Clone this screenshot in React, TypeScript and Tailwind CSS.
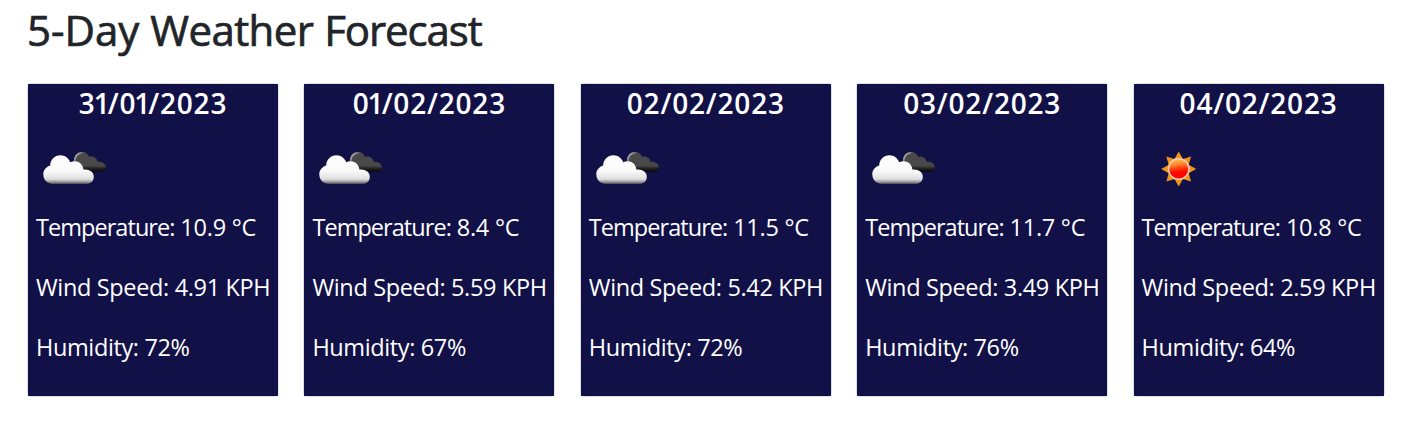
import React from "react";

type Condition = "clouds" | "sun";

interface Day {
  date: string;
  condition: Condition;
  temperature: string;
  wind: string;
  humidity: string;
}

const days: Day[] = [
  { date: "31/01/2023", condition: "clouds", temperature: "10.9", wind: "4.91", humidity: "72" },
  { date: "01/02/2023", condition: "clouds", temperature: "8.4", wind: "5.59", humidity: "67" },
  { date: "02/02/2023", condition: "clouds", temperature: "11.5", wind: "5.42", humidity: "72" },
  { date: "03/02/2023", condition: "clouds", temperature: "11.7", wind: "3.49", humidity: "76" },
  { date: "04/02/2023", condition: "sun", temperature: "10.8", wind: "2.59", humidity: "64" },
];

function Clouds({ id }: { id: string }) {
  return (
    <svg viewBox="0 0 75 75" className="block size-[75px]" aria-hidden="true">
      <defs>
        <linearGradient id={`${id}-white`} x1="0" y1="0" x2="0" y2="1">
          <stop offset="0" stopColor="#ffffff" />
          <stop offset="0.55" stopColor="#fafafa" />
          <stop offset="0.84" stopColor="#dedede" />
          <stop offset="0.93" stopColor="#999999" />
          <stop offset="1" stopColor="#66666c" />
        </linearGradient>
        <linearGradient id={`${id}-dark`} x1="0" y1="0" x2="0" y2="1">
          <stop offset="0" stopColor="#4a4a4a" />
          <stop offset="0.7" stopColor="#484848" />
          <stop offset="0.84" stopColor="#202020" />
          <stop offset="1" stopColor="#050505" />
        </linearGradient>
        <linearGradient id={`${id}-rim`} x1="0" y1="0" x2="1" y2="0.5">
          <stop offset="0" stopColor="#c8c8c8" />
          <stop offset="0.35" stopColor="#a0a0a0" stopOpacity="0.8" />
          <stop offset="0.6" stopColor="#555555" stopOpacity="0" />
        </linearGradient>
      </defs>
      <path
        d="M42 41.8C38 41 36.5 37 38 33C37.5 26 41.5 22 46 22C49.3 22 51.8 23.8 53.2 27C57 25.5 61 28 61.6 32C66 31.2 69.8 34 69.8 37.2C69.8 40.2 67.5 41.8 64.5 41.8Z"
        fill={`url(#${id}-dark)`}
      />
      <path
        d="M38.7 32C38.7 26.5 41.5 23 46 22.8C49 22.8 51 24.2 52.4 26.6"
        fill="none"
        stroke={`url(#${id}-rim)`}
        strokeWidth="1.8"
      />
      <path
        d="M16.5 53.8C11.5 53.8 7.3 50 7.3 44.5C7.3 40 10.3 36.8 14.2 35.6C14.2 29.5 18.7 25.2 24.4 25.2C29 25.2 32.7 28 34.2 32.2C40.5 29.5 47 33.2 47.4 39.6C53 38.8 57.8 42 57.8 46.8C57.8 51.2 54.8 53.8 50.5 53.8Z"
        fill={`url(#${id}-white)`}
      />
    </svg>
  );
}

function Sun({ id }: { id: string }) {
  return (
    <svg viewBox="0 0 75 75" className="block size-[75px]" aria-hidden="true">
      <defs>
        <linearGradient id={`${id}-disc`} x1="0.35" y1="0" x2="0.5" y2="1">
          <stop offset="0" stopColor="#ffc04c" />
          <stop offset="0.25" stopColor="#ff9130" />
          <stop offset="0.5" stopColor="#fd3a10" />
          <stop offset="0.65" stopColor="#fc0800" />
          <stop offset="1" stopColor="#fc0000" />
        </linearGradient>
      </defs>
      <g transform="translate(36.7 39)">
        <path
          d="M0-17.5L4.2-10L12.4-12.4L10-4.2L17.5 0L10 4.2L12.4 12.4L4.2 10L0 17.5L-4.2 10L-12.4 12.4L-10 4.2L-17.5 0L-10-4.2L-12.4-12.4L-4.2-10Z"
          fill="#ef9419"
        />
        <circle r="10.2" fill={`url(#${id}-disc)`} stroke="#f4cbb0" strokeWidth="1.5" />
      </g>
    </svg>
  );
}

// The digit 1 is kerned tighter than the other figures.
function KernedDate({ value }: { value: string }) {
  return (
    <>
      {value.split("").map((char, index) =>
        char === "1" ? (
          <span key={index} className="-ml-[2px] tracking-[-2px]">
            {char}
          </span>
        ) : (
          <React.Fragment key={index}>{char}</React.Fragment>
        ),
      )}
    </>
  );
}

function DayCard({ day, id }: { day: Day; id: string }) {
  return (
    <article className="h-[314px] rounded-[4px] border border-[#dedee2]">
      <div className="flex h-full flex-col bg-[#121147] text-[23.5px] leading-[36px] text-white">
        <h2 className="pt-px text-center text-[28px] leading-[36px] font-semibold tracking-[0.8px]">
          <KernedDate value={day.date} />
        </h2>
        <div className="mt-[9px] pl-[8px]">
          {day.condition === "clouds" ? <Clouds id={id} /> : <Sun id={id} />}
        </div>
        <div className="mt-[4px] flex flex-col gap-[24px] pl-[8px] whitespace-nowrap">
          <p className="tracking-[-0.25px]">
            <span className="tracking-[-0.95px]">Temperature:</span> {day.temperature} °C
          </p>
          <p className="tracking-[-0.35px]">Wind Speed: {day.wind} KPH</p>
          <p className="tracking-[-0.38px]">Humidity: {day.humidity}%</p>
        </div>
      </div>
    </article>
  );
}

export default function App() {
  return (
    <main className="h-[447px] overflow-hidden bg-white pl-[27px] font-['Open_Sans',sans-serif]">
      <h1 className="h-[83px] pt-[5px] text-[42px] leading-[50px] font-medium whitespace-nowrap text-[#212529] [-webkit-text-stroke:0.7px_#212529]">
        5-Day <span className="tracking-[-0.6px]">Weather</span>{" "}
        <span className="tracking-[-1.1px]">Forecast</span>
      </h1>
      <section className="grid grid-cols-[repeat(5,252px)] gap-x-[24.4px]">
        {days.map((day, index) => (
          <DayCard key={day.date} day={day} id={`day-${index}`} />
        ))}
      </section>
    </main>
  );
}
